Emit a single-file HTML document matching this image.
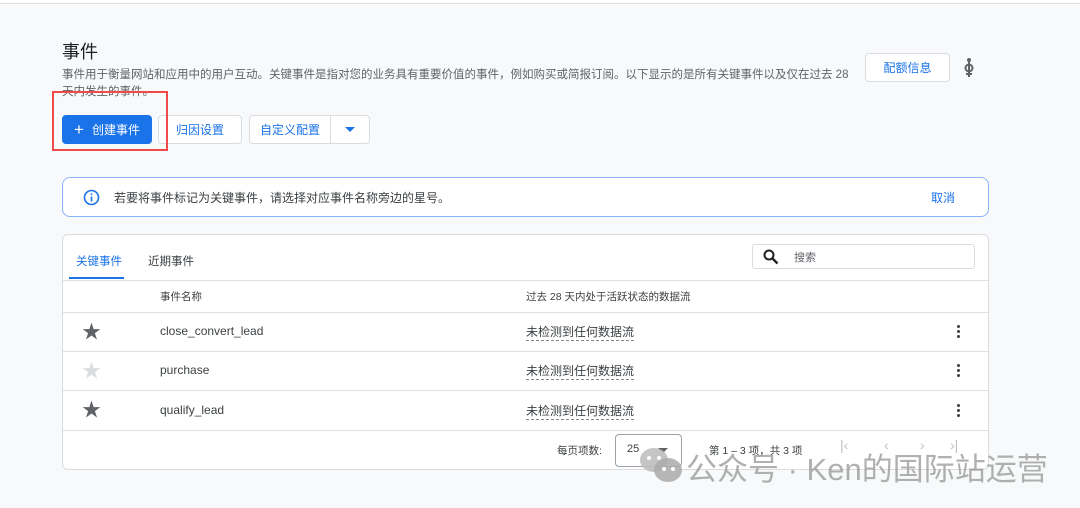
<!DOCTYPE html>
<html><head><meta charset="utf-8"><style>
*{box-sizing:border-box;margin:0;padding:0}
body{width:1080px;height:508px;background:#f8f9fa;font-family:"Liberation Sans","Noto Sans CJK SC",sans-serif;position:relative;overflow:hidden;color:#202124}
.a{position:absolute;white-space:nowrap}
.btn{position:absolute;border:1px solid #dadce0;background:#fff;border-radius:4px;color:#1a73e8;font-size:12px;display:flex;align-items:center;justify-content:center}
.line{position:absolute;left:63px;width:925px;height:1px;background:#e0e0e0}
.cell{font-size:12px;color:#3c4043}
.dash{border-bottom:1px dashed #80868b;padding-bottom:1px}
.dots{position:absolute;width:3px}
.dots i{display:block;width:3px;height:3px;border-radius:50%;background:#3c4043;margin-bottom:2px}
.pg{position:absolute;font-size:14px;color:#bdc1c6}
</style></head><body>
<div class="a" style="top:0;left:0;width:1080px;height:4px;border-bottom:1px solid #e0e0e0;background:#fff"></div>
<div class="a" style="left:62px;top:38px;font-size:18px;color:#202124">事件</div>
<div class="a" style="left:62px;top:67px;font-size:11.5px;color:#5f6368;line-height:17px">事件用于衡量网站和应用中的用户互动。关键事件是指对您的业务具有重要价值的事件，例如购买或简报订阅。以下显示的是所有关键事件以及仅在过去 28<br>天内发生的事件。</div>
<div class="btn" style="left:865px;top:53px;width:85px;height:29px">配额信息</div>
<svg class="a" style="left:962px;top:57px" width="14" height="22" viewBox="0 0 14 22"><circle cx="7" cy="3" r="2" fill="#5f6368"/><line x1="7" y1="3" x2="7" y2="20" stroke="#5f6368" stroke-width="2"/><circle cx="7" cy="11" r="3.5" fill="none" stroke="#5f6368" stroke-width="2"/><line x1="4" y1="17" x2="10" y2="17" stroke="#5f6368" stroke-width="2"/></svg>
<div class="btn" style="left:62px;top:115px;width:90px;height:29px;background:#1a73e8;border-color:#1a73e8;color:#fff"><span style="font-size:17px;margin-right:8px">+</span>创建事件</div>
<div class="btn" style="left:158px;top:115px;width:84px;height:29px">归因设置</div>
<div class="btn" style="left:249px;top:115px;width:82px;height:29px;border-radius:4px 0 0 4px">自定义配置</div>
<div class="btn" style="left:330px;top:115px;width:40px;height:29px;border-radius:0 4px 4px 0"><svg width="10" height="6"><path d="M0 0L10 0L5 5Z" fill="#1a73e8"/></svg></div>
<div class="a" style="left:52px;top:91px;width:116px;height:60px;border:2px solid #f04b4b"></div>
<div class="a" style="left:62px;top:177px;width:927px;height:40px;border:1px solid #8ab4f8;border-radius:8px;background:#fff"></div>
<svg class="a" style="left:83px;top:189px" width="17" height="17" viewBox="0 0 17 17"><circle cx="8.5" cy="8.5" r="7" fill="none" stroke="#1a73e8" stroke-width="1.6"/><rect x="7.7" y="7.5" width="1.6" height="5" fill="#1a73e8"/><rect x="7.7" y="4.5" width="1.6" height="1.6" fill="#1a73e8"/></svg>
<div class="a" style="left:114px;top:189px;font-size:12px;color:#3c4043">若要将事件标记为关键事件，请选择对应事件名称旁边的星号。</div>
<div class="a" style="left:931px;top:189px;font-size:12px;color:#1a73e8">取消</div>
<div class="a" style="left:62px;top:234px;width:927px;height:236px;border:1px solid #dadce0;border-radius:6px;background:#fff"></div>
<div class="a" style="left:76px;top:253px;font-size:11.5px;color:#1a73e8">关键事件</div>
<div class="a" style="left:69px;top:277px;width:55px;height:2px;background:#1a73e8"></div>
<div class="a" style="left:148px;top:253px;font-size:11.5px;color:#3c4043">近期事件</div>
<div class="a" style="left:752px;top:244px;width:223px;height:25px;border:1px solid #dadce0;border-radius:3px"></div>
<svg class="a" style="left:763px;top:249px" width="16" height="16" viewBox="0 0 16 16"><circle cx="6" cy="6" r="4.5" fill="none" stroke="#202124" stroke-width="2"/><line x1="9.5" y1="9.5" x2="14.5" y2="14.5" stroke="#202124" stroke-width="2.4"/></svg>
<div class="a" style="left:794px;top:249px;font-size:11px;color:#5f6368">搜索</div>
<div class="line" style="top:280px"></div>
<div class="a" style="left:160px;top:289px;font-size:10.5px;color:#3c4043">事件名称</div>
<div class="a" style="left:526px;top:289px;font-size:10.5px;color:#3c4043">过去 28 天内处于活跃状态的数据流</div>
<div class="line" style="top:312px"></div>
<div class="a" style="left:82px;top:317px;font-size:19px;color:#5f6368">★</div>
<div class="a cell" style="left:160px;top:324px">close_convert_lead</div>
<div class="a cell" style="left:526px;top:323px"><span class="dash">未检测到任何数据流</span></div>
<div class="dots" style="left:957px;top:325px"><i></i><i></i><i></i></div>
<div class="line" style="top:351px"></div>
<div class="a" style="left:82px;top:356px;font-size:19px;color:#dadce0">★</div>
<div class="a cell" style="left:160px;top:363px">purchase</div>
<div class="a cell" style="left:526px;top:362px"><span class="dash">未检测到任何数据流</span></div>
<div class="dots" style="left:957px;top:364px"><i></i><i></i><i></i></div>
<div class="line" style="top:390px"></div>
<div class="a" style="left:82px;top:395px;font-size:19px;color:#5f6368">★</div>
<div class="a cell" style="left:160px;top:403px">qualify_lead</div>
<div class="a cell" style="left:526px;top:402px"><span class="dash">未检测到任何数据流</span></div>
<div class="dots" style="left:957px;top:404px"><i></i><i></i><i></i></div>
<div class="line" style="top:430px"></div>
<div class="a" style="left:557px;top:443px;font-size:10.5px;color:#3c4043">每页项数:</div>
<div class="a" style="left:615px;top:434px;width:67px;height:33px;border:1px solid #9aa0a6;border-radius:4px;background:#fff"></div>
<div class="a" style="left:627px;top:443px;font-size:11px;color:#3c4043">25</div>
<svg class="a" style="left:658px;top:448px" width="10" height="6"><path d="M0 0L10 0L5 5Z" fill="#5f6368"/></svg>
<div class="a" style="left:709px;top:443px;font-size:10.5px;color:#3c4043">第 1 – 3 项，共 3 项</div>
<div class="pg" style="left:840px;top:437px">|‹</div>
<div class="pg" style="left:884px;top:437px">‹</div>
<div class="pg" style="left:920px;top:437px">›</div>
<div class="pg" style="left:950px;top:437px">›|</div>
<svg class="a" style="left:638px;top:446px" width="46" height="38" viewBox="0 0 46 38"><ellipse cx="16" cy="14" rx="14" ry="12" fill="#bbb" opacity=".85"/><ellipse cx="30" cy="24" rx="14" ry="12" fill="#aaa" opacity=".85"/><circle cx="11" cy="12" r="2" fill="#fff"/><circle cx="21" cy="12" r="2" fill="#fff"/><circle cx="26" cy="23" r="2" fill="#fff"/><circle cx="35" cy="23" r="2" fill="#fff"/></svg>
<div class="a" style="left:686px;top:444px;font-size:31px;color:rgba(150,150,150,.75)">公众号 · Ken的国际站运营</div>
</body></html>
